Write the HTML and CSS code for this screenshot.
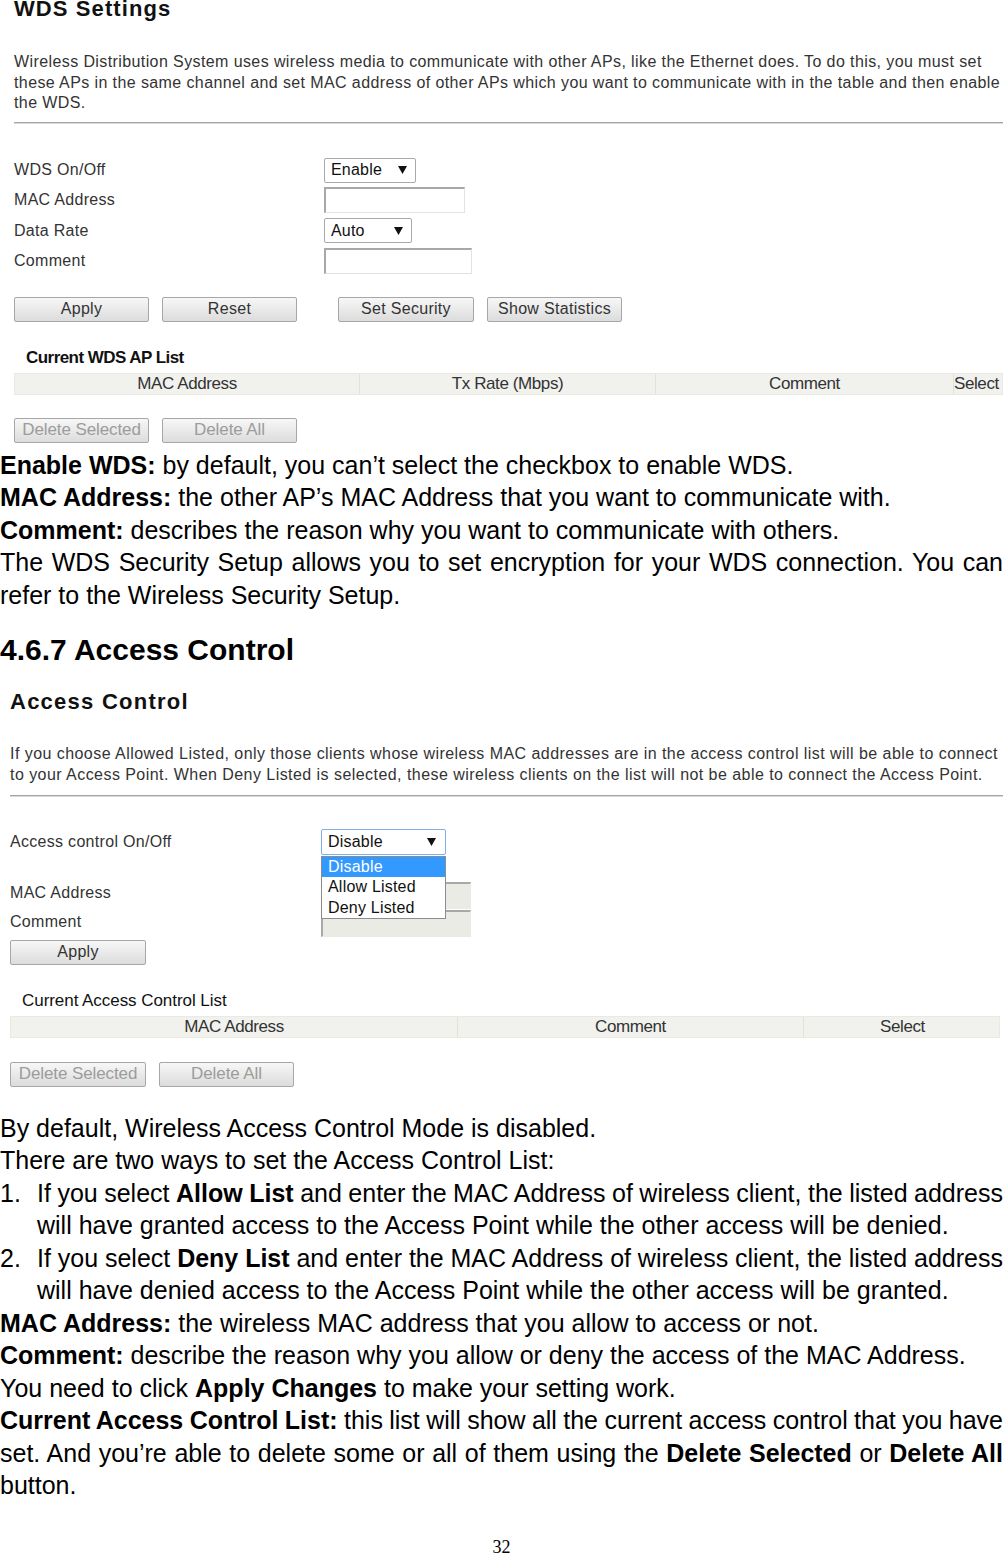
FILE: index.html
```html
<!DOCTYPE html>
<html lang="en">
<head>
<meta charset="utf-8">
<title>WDS Settings / Access Control</title>
<link rel="stylesheet" href="styles.css">
</head>
<body>
<div class="page">

  <section class="shot shot-wds">
    <h2 class="shot-title">WDS Settings</h2>
    <p class="shot-desc">Wireless Distribution System uses wireless media to communicate with other APs, like the Ethernet does. To do this, you must set<br>these APs in the same channel and set MAC address of other APs which you want to communicate with in the table and then enable<br>the WDS.</p>
    <hr class="shot-rule">
    <div class="form form-wds">
      <div class="frow">
        <span class="flabel">WDS On/Off</span>
        <div class="select sel-enable"><span>Enable</span><svg class="arrow" width="9" height="8" viewBox="0 0 9 8"><path d="M0 0H9L4.5 8Z"/></svg></div>
      </div>
      <div class="frow">
        <span class="flabel">MAC Address</span>
        <div class="input in-mac"></div>
      </div>
      <div class="frow">
        <span class="flabel">Data Rate</span>
        <div class="select sel-auto"><span>Auto</span><svg class="arrow" width="9" height="8" viewBox="0 0 9 8"><path d="M0 0H9L4.5 8Z"/></svg></div>
      </div>
      <div class="frow">
        <span class="flabel">Comment</span>
        <div class="input in-comment"></div>
      </div>
    </div>
    <div class="btnrow btnrow-main">
      <button class="btn">Apply</button>
      <button class="btn gap13">Reset</button>
      <button class="btn w136 gap41">Set Security</button>
      <button class="btn gap13">Show Statistics</button>
    </div>
    <div class="list-title list-title-wds">Current WDS AP List</div>
    <div class="list list-wds">
      <div class="cell">MAC Address</div>
      <div class="cell">Tx Rate (Mbps)</div>
      <div class="cell">Comment</div>
      <div class="cell last">Select</div>
    </div>
    <div class="btnrow btnrow-del">
      <button class="btn btn-dis">Delete Selected</button>
      <button class="btn btn-dis gap13">Delete All</button>
    </div>
  </section>

  <div class="doc doc-1">
    <p><b>Enable WDS:</b> by default, you can’t select the checkbox to enable WDS.</p>
    <p><b>MAC Address:</b> the other AP’s MAC Address that you want to communicate with.</p>
    <p><b>Comment:</b> describes the reason why you want to communicate with others.</p>
    <p>The WDS Security Setup allows you to set encryption for your WDS connection. You can refer to the Wireless Security Setup.</p>
  </div>

  <h2 class="doc-h">4.6.7 Access Control</h2>

  <section class="shot shot-ac">
    <h2 class="shot-title">Access Control</h2>
    <p class="shot-desc">If you choose Allowed Listed, only those clients whose wireless MAC addresses are in the access control list will be able to connect<br>to your Access Point. When Deny Listed is selected, these wireless clients on the list will not be able to connect the Access Point.</p>
    <hr class="shot-rule">
    <div class="form form-ac">
      <div class="frow row-ac1">
        <span class="flabel">Access control On/Off</span>
        <div class="select sel-disable"><span>Disable</span><svg class="arrow" width="9" height="8" viewBox="0 0 9 8"><path d="M0 0H9L4.5 8Z"/></svg>
          <ul class="dropdown">
            <li class="opt opt-active">Disable</li>
            <li class="opt">Allow Listed</li>
            <li class="opt">Deny Listed</li>
          </ul>
        </div>
      </div>
      <div class="frow row-ac2">
        <span class="flabel">MAC Address</span>
        <div class="input input-dis"></div>
      </div>
      <div class="frow row-ac3">
        <span class="flabel">Comment</span>
        <div class="input input-dis"></div>
      </div>
      <div class="btnrow btnrow-apply">
        <button class="btn w136">Apply</button>
      </div>
    </div>
    <div class="list-title list-title-ac">Current Access Control List</div>
    <div class="list list-ac">
      <div class="cell">MAC Address</div>
      <div class="cell">Comment</div>
      <div class="cell last">Select</div>
    </div>
    <div class="btnrow btnrow-del btnrow-del2">
      <button class="btn btn-dis w136">Delete Selected</button>
      <button class="btn btn-dis gap13">Delete All</button>
    </div>
  </section>

  <div class="doc doc-2">
    <p>By default, Wireless Access Control Mode is disabled.</p>
    <p>There are two ways to set the Access Control List:</p>
    <div class="item"><span class="num">1.</span><span class="itext tight">If you select <b>Allow List</b> and enter the MAC Address of wireless client, the listed address <span class="ws0">will have granted access to the Access Point while the other access will be denied.</span></span></div>
    <div class="item"><span class="num">2.</span><span class="itext tight">If you select <b>Deny List</b> and enter the MAC Address of wireless client, the listed address <span class="ws0">will have denied access to the Access Point while the other access will be granted.</span></span></div>
    <p><b>MAC Address:</b> the wireless MAC address that you allow to access or not.</p>
    <p><b>Comment:</b> describe the reason why you allow or deny the access of the MAC Address.</p>
    <p>You need to click <b>Apply Changes</b> to make your setting work.</p>
    <p class="tight"><b>Current Access Control List:</b> this list will show all the current access control that you have <span class="ws0">set. And you’re able to delete some or all of them using the <b>Delete Selected</b> or <b>Delete All</b> button.</span></p>
  </div>

  <div class="pageno">32</div>
</div>
</body>
</html>
```

FILE: styles.css
```css
* { box-sizing: border-box; }

body {
  margin: 0;
  background: #fff;
  color: #000;
  font-family: "Liberation Sans", Arial, sans-serif;
  overflow-x: hidden;
}

.page { width: 1003px; }

/* ---------- embedded UI screenshots ---------- */
.shot { overflow: hidden; color: #333; }
.shot-wds { padding-left: 14px; }
.shot-ac { padding-left: 10px; margin-top: 22.3px; }

.shot-title {
  margin: 0;
  font-size: 22px;
  line-height: 22px;
  font-weight: bold;
  letter-spacing: 1.1px;
  color: #111;
}
.shot-wds .shot-title { margin-top: -2px; }
.shot-ac .shot-title { letter-spacing: 1.25px; line-height: 24px; }

.shot-desc {
  margin: 30px 0 0;
  font-size: 16px;
  line-height: 20.5px;
  letter-spacing: 0.45px;
  white-space: nowrap;
}
.shot-wds .shot-desc { margin-top: 32px; letter-spacing: 0.4px; }

.shot-rule {
  margin: 9.5px 0 0;
  height: 2px;
  border: 0;
  border-top: 1px solid #a6a6a6;
  border-bottom: 1px solid #d9d9d9;
}
.shot-wds .shot-rule { margin-top: 8.5px; }
.shot-ac .shot-rule { margin-top: 10.2px; }

.form { display: flex; flex-direction: column; }
.form-wds { margin-top: 33px; gap: 4.33px; }
.form-ac { margin-top: 31.5px; }

.frow { display: flex; align-items: center; height: 26px; }
.flabel { width: 310px; flex: none; font-size: 16px; letter-spacing: 0.3px; }
.form-ac .flabel { width: 311px; }

.row-ac1 { margin-bottom: 27px; }
.row-ac2 { height: 27px; margin-bottom: 1px; }
.row-ac3 { height: 27px; margin-bottom: 3px; }
.row-ac2 .flabel { margin-top: -5px; }
.row-ac3 .flabel { margin-top: -3px; }

.select {
  position: relative;
  display: flex;
  align-items: center;
  justify-content: space-between;
  height: 25px;
  padding: 0 8px 0 6px;
  border: 1px solid #a9a9a9;
  border-radius: 2px;
  background: #fff;
  font-size: 16px;
  letter-spacing: 0.2px;
  color: #111;
}
.arrow { fill: #111; }
.sel-enable { width: 92px; }
.sel-auto { width: 88px; }
.sel-disable {
  width: 125px;
  height: 26px;
  padding-right: 9px;
  border-color: #7fb0e6;
}

.dropdown {
  position: absolute;
  top: 26px;
  left: -1px;
  width: 125px;
  margin: 0;
  padding: 0;
  list-style: none;
  background: #fff;
  border: 1px solid #8c8c8c;
  z-index: 2;
}
.opt {
  height: 20.5px;
  line-height: 20.5px;
  padding-left: 6px;
  font-size: 16px;
  letter-spacing: 0.2px;
  color: #111;
}
.opt-active { background: #3399ff; color: #fff; }

.input {
  height: 26px;
  background: #fff;
  border-top: 2px solid #a8a8a8;
  border-left: 2px solid #a8a8a8;
  border-right: 1px solid #e3e3e3;
  border-bottom: 1px solid #e3e3e3;
}
.in-mac { width: 141px; }
.in-comment { width: 148px; }
.input-dis {
  width: 150px;
  height: 27px;
  background: #ebebe6;
  border-right-color: #ebebe6;
  border-bottom-color: #ebebe6;
}

.btnrow { display: flex; }
.btnrow-main { margin-top: 23px; }
.btnrow-del { margin-top: 23px; }
.btnrow-del2 { margin-top: 24px; }

.btn {
  width: 135px;
  height: 25px;
  padding: 0;
  border: 1px solid #a7a7a7;
  border-radius: 2px;
  background: linear-gradient(#f7f7f7, #dcdcdc);
  font-family: "Liberation Sans", Arial, sans-serif;
  font-size: 16px;
  letter-spacing: 0.3px;
  color: #333;
  display: flex;
  align-items: center;
  justify-content: center;
}
.w136 { width: 136px; }
.gap13 { margin-left: 13px; }
.gap41 { margin-left: 41px; }
.btn-dis { color: #9c9c9c; font-size: 17px; letter-spacing: -0.1px; }

.list-title {
  margin-top: 26px;
  height: 20px;
  line-height: 20px;
  font-size: 17px;
  letter-spacing: -0.4px;
  color: #111;
}
.list-title-wds { padding-left: 12px; font-weight: bold; letter-spacing: -0.55px; }
.list-title-ac { padding-left: 12px; letter-spacing: -0.05px; }

.list {
  display: grid;
  height: 22px;
  margin-top: 5px;
  background: #f1f1ee;
  border: 1px solid #ece9de;
}
.list-wds { grid-template-columns: 345px 296px 298px 50px; width: 989px; }
.list-ac { grid-template-columns: 447px 346px 197px; width: 990px; }

.cell {
  display: flex;
  align-items: center;
  justify-content: center;
  font-size: 17px;
  letter-spacing: -0.4px;
  color: #333;
  border-right: 1px solid #e4e1d6;
  white-space: nowrap;
}
.cell.last { border-right: 0; }
.list-wds .cell.last { justify-content: flex-start; padding-left: 0; }

/* ---------- document text ---------- */
.doc {
  font-size: 25px;
  line-height: 32.5px;
  text-align: justify;
}
.doc p { margin: 0; }
.doc-1 { margin-top: 5.75px; }
.doc-2 { margin-top: 24.75px; }
.tight { word-spacing: -1px; }
.ws0 { word-spacing: 0; }

.item { display: flex; }
.num { width: 37px; flex: none; }
.itext { flex: 1; }

.doc-h {
  margin: 20.75px 0 0;
  font-size: 30px;
  line-height: 36px;
  font-weight: bold;
}

.pageno {
  margin-top: 39.25px;
  text-align: center;
  font-family: "Liberation Serif", "Times New Roman", serif;
  font-size: 18px;
  line-height: 12px;
}
```
